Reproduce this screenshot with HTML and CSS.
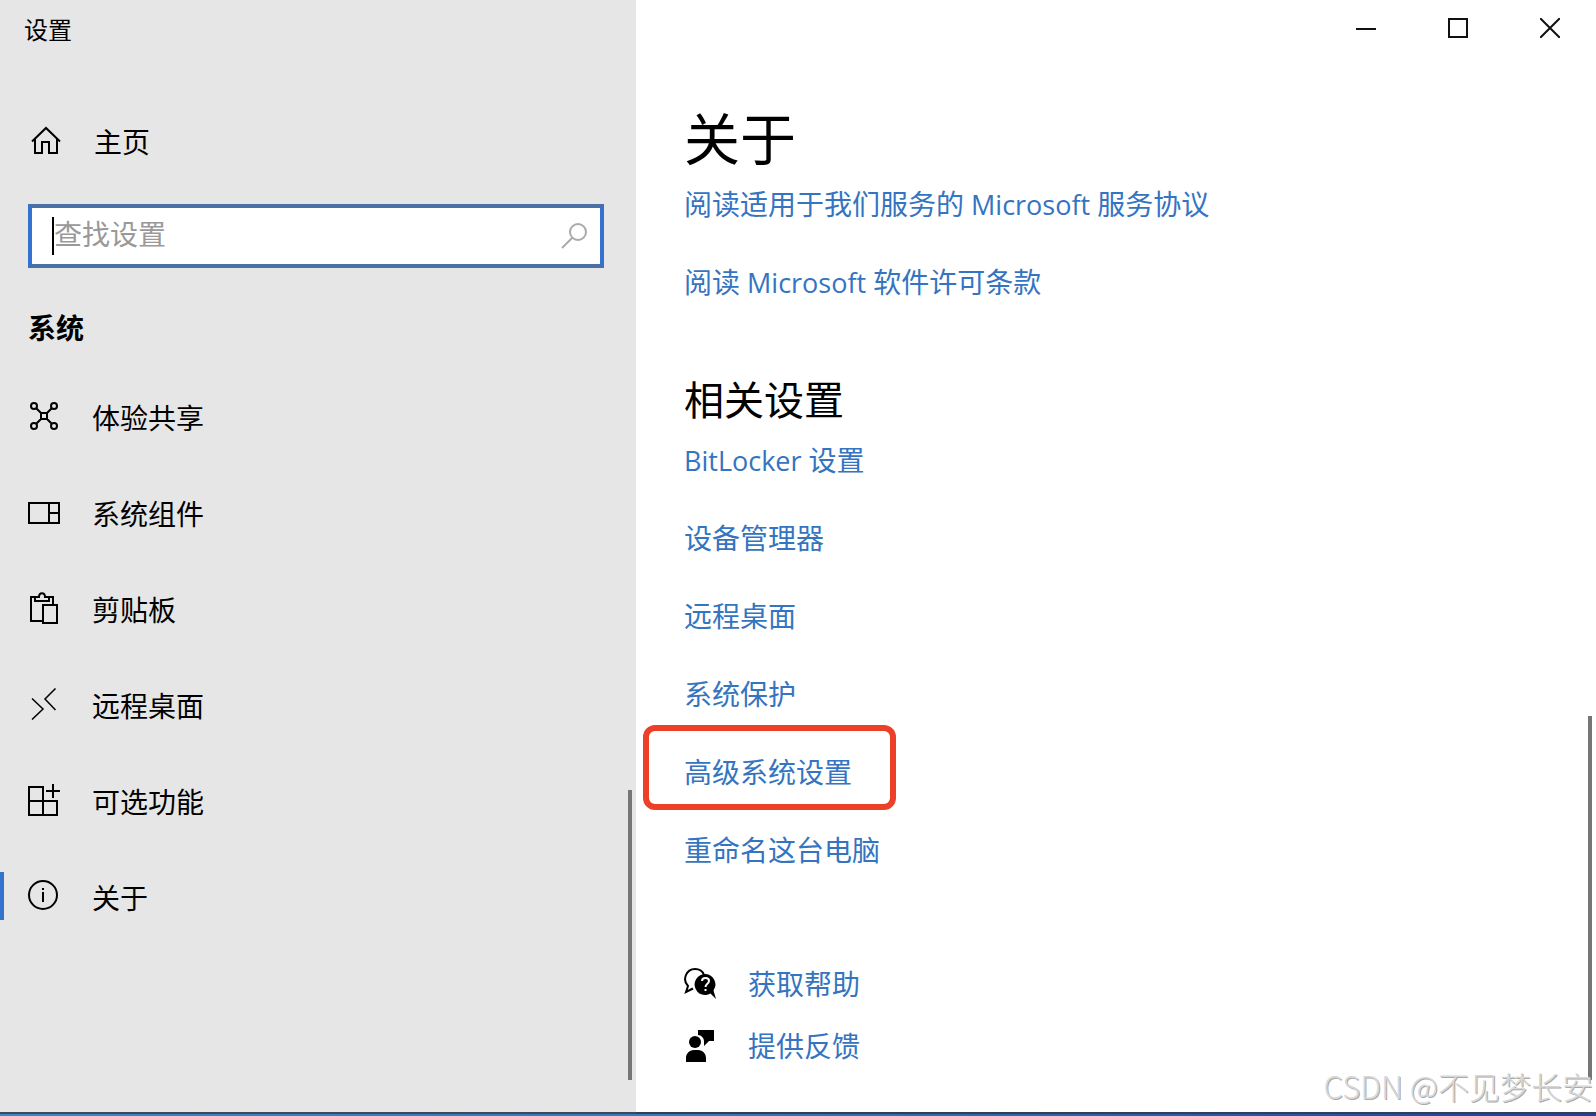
FILE: index.html
```html
<!DOCTYPE html>
<html lang="zh-CN">
<head>
<meta charset="utf-8">
<title>设置</title>
<link rel="stylesheet" href="styles.css">
</head>
<body>
<div class="window">
  <aside class="sidebar">
    <div class="app-title">设置</div>
    <a class="home" href="#home">
      <svg class="icon" viewBox="0 0 32 32"><path d="M2 15.500 16 2l14 13.500M5 13v14h7V16h7v11h8V13"/></svg>
      <span>主页</span>
    </a>
    <form class="search">
      <span class="caret"></span>
      <input type="text" placeholder="查找设置" aria-label="查找设置">
      <svg class="search-icon" viewBox="0 0 28 28"><circle cx="18" cy="10" r="8"/><path d="M12 16 2 26"/></svg>
    </form>
    <h2 class="group">系统</h2>
    <nav class="nav">
      <a href="#share"><svg class="icon" viewBox="0 0 32 32"><circle cx="6" cy="6" r="3"/><circle cx="26" cy="6" r="3"/><circle cx="6" cy="26" r="3"/><circle cx="26" cy="26" r="3"/><path d="M13 13h6v6h-6zM8 8l5 5M24 8l-5 5M8 24l5-5M24 24l-5-5"/></svg><span>体验共享</span></a>
      <a href="#components"><svg class="icon" viewBox="0 0 32 32"><path d="M1 7h30v20H1zM21 7v20M21 17h10"/></svg><span>系统组件</span></a>
      <a href="#clipboard"><svg class="icon" viewBox="0 0 32 32"><path d="M14 29H3V5h4M21 5h4v7M15 13h14v18H15zM7 5v4h14V5h-4c0-5-6-5-6 0z"/></svg><span>剪贴板</span></a>
      <a href="#remote"><svg class="icon thin" viewBox="0 0 32 32"><path d="M27.500.5 17 11l10.500 11M4 10.500 15 21 4 31.500"/></svg><span>远程桌面</span></a>
      <a href="#optional"><svg class="icon" viewBox="0 0 32 32"><path d="M15 31V3H1v28h28V17H1M18 7h14M25 0v14"/></svg><span>可选功能</span></a>
      <a href="#about" class="current" aria-current="page"><svg class="icon" viewBox="0 0 32 32"><circle cx="15" cy="15" r="14"/><path d="M15 8v2M15 12v10"/></svg><span>关于</span></a>
    </nav>
    <div class="scrollbar"></div>
  </aside>
  <main class="content">
    <div class="controls">
      <button type="button" aria-label="最小化"><svg viewBox="0 0 20 20"><path d="M0 11h20"/></svg></button>
      <button type="button" aria-label="最大化"><svg viewBox="0 0 20 20"><path d="M1 1h18v18H1z"/></svg></button>
      <button type="button" aria-label="关闭"><svg viewBox="0 0 20 20"><path d="m0 0 20 20M20 0 0 20"/></svg></button>
    </div>
    <h1>关于</h1>
    <ul class="links">
      <li><a href="#services">阅读适用于我们服务的<span class="latin"> Microsoft </span>服务协议</a></li>
      <li><a href="#license">阅读<span class="latin"> Microsoft </span>软件许可条款</a></li>
    </ul>
    <h2 class="related">相关设置</h2>
    <ul class="links">
      <li><a href="#bitlocker"><span class="latin">BitLocker </span>设置</a></li>
      <li><a href="#devices">设备管理器</a></li>
      <li><a href="#rdp">远程桌面</a></li>
      <li><a href="#protection">系统保护</a></li>
      <li><a href="#advanced" class="marked">高级系统设置</a></li>
      <li><a href="#rename">重命名这台电脑</a></li>
    </ul>
    <ul class="links help">
      <li><svg class="icon" viewBox="0 0 32 32"><path d="M9 20.500 2 24l2-6C-2 12 2 1 11 1c5 0 8 3 9 6"/><path class="solid" d="M21.500 6a10.500 10.500 0 1 0 5 19.500L32 31l-2.500-8.500A10.500 10.500 0 0 0 21.500 6z"/><path class="question" d="M18 13c0-4 7-4 7 0 0 3-3.500 2.500-3.500 6M21.500 21v2"/></svg><a href="#help">获取帮助</a></li>
      <li><svg class="icon" viewBox="0 0 32 32"><path class="solid" d="M2 32v-4c0-4 3-8 8-8h4c5 0 8 4 8 8v4zM14 0h16v11h-5l-5 5v-5c0-3-3-6-6-6z"/><circle class="solid" cx="11" cy="12" r="6"/></svg><a href="#feedback">提供反馈</a></li>
    </ul>
    <div class="scrollbar"></div>
    <div class="watermark">CSDN @不见梦长安</div>
  </main>
</div>
</body>
</html>
```

FILE: styles.css
```css
* { box-sizing: border-box; }

body {
  margin: 0;
  background: #fff;
  color: #000;
  font: 28px/40px "Open Sans", "Noto Sans CJK SC", sans-serif;
}

a { color: inherit; text-decoration: none; }
h1, h2, ul { margin: 0; padding: 0; font-weight: 400; }
ul { list-style: none; }

.window {
  display: flex;
  min-height: 100vh;
  border-bottom: 2px solid;
  border-image: linear-gradient(to right, #3a86c4, #3478b8 45%, #2040a0) 2;
}

.sidebar {
  position: relative;
  flex: 0 0 636px;
  background: #e6e6e6;
  box-shadow: inset 0 -2px #3a4a5c;
}

.app-title {
  padding: 2px 0 0 24px;
  font-size: 24px;
  line-height: 56px;
}

.icon {
  flex: none;
  width: 32px;
  height: 32px;
  fill: none;
  stroke: #000;
  stroke-width: 2;
}
.icon.thin { stroke-width: 1.5; }
.icon .solid { fill: #000; stroke: none; }
.icon .question { stroke: #fff; }

.home {
  display: flex;
  align-items: center;
  gap: 32px;
  height: 48px;
  margin-top: 60px;
  padding-left: 30px;
}

.search {
  display: flex;
  align-items: center;
  height: 64px;
  margin: 38px 32px 0 28px;
  padding: 0 12px 0 20px;
  background: #fff;
  border: 4px solid #3373cf;
  border-top-color: #4a70a5;
  border-bottom-color: #4a70a5;
}
.caret { width: 2px; height: 38px; background: #000; }
.search input {
  flex: 1;
  min-width: 0;
  height: 40px;
  padding: 0 0 4px;
  border: 0;
  outline: 0;
  background: none;
  font: inherit;
}
.search input::placeholder { color: #999; opacity: 1; }
.search-icon {
  width: 28px;
  height: 28px;
  fill: none;
  stroke: #aaa;
  stroke-width: 2;
}

.group {
  margin: 40px 0 20px;
  padding-left: 28px;
  font-size: 28px;
  font-weight: 700;
}

.nav a {
  display: flex;
  align-items: center;
  gap: 32px;
  height: 96px;
  padding-left: 28px;
}
.nav span { padding-top: 4px; }
.nav .current {
  background: linear-gradient(#3373cf, #3373cf) left center / 4px 48px no-repeat;
}

.scrollbar {
  position: absolute;
  right: 4px;
  bottom: 34px;
  width: 4px;
  height: 290px;
  background: #767676;
}

.content {
  position: relative;
  flex: 1;
  min-width: 0;
  padding: 0 0 40px 48px;
  box-shadow: inset 0 -2px #2f3f58;
}
.content .scrollbar { height: 364px; }

.controls { display: flex; justify-content: flex-end; }
.controls button {
  display: grid;
  place-items: center;
  width: 92px;
  height: 56px;
  padding: 0;
  border: 0;
  background: none;
}
.controls svg {
  width: 20px;
  height: 20px;
  fill: none;
  stroke: #111;
  stroke-width: 2;
}

h1 {
  margin: 50px 0 14px;
  font-size: 56px;
  line-height: 64px;
}
.related {
  margin: 70px 0 12px;
  font-size: 40px;
  line-height: 56px;
}

.links { display: grid; gap: 38px; color: #3474c0; }
.links li { display: flex; align-items: center; gap: 32px; }
.latin { font-size: 27px; line-height: 1; }
.help { gap: 22px; margin-top: 94px; }

.marked { position: relative; }
.marked::after {
  content: "";
  position: absolute;
  inset: -27px -44px -18px -41px;
  border: 6px solid #ec4128;
  border-radius: 12px;
}

.watermark {
  position: absolute;
  right: 3px;
  bottom: 8px;
  color: #d8d8d8;
  font: 300 31px/40px "Noto Sans CJK SC", sans-serif;
  text-shadow: 1px 1px #aaa;
}
```
